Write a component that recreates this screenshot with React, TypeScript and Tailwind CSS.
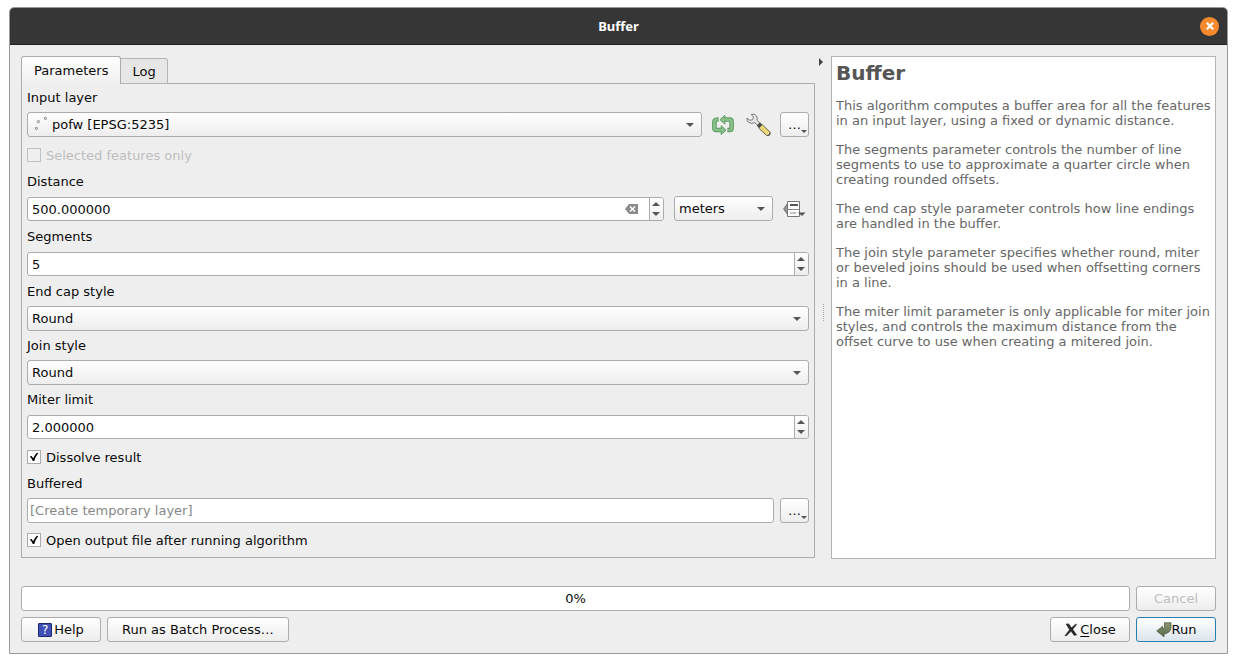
import { useState, type ReactNode } from "react";

const HELP_TEXT = [
  "This algorithm computes a buffer area for all the features in an input layer, using a fixed or dynamic distance.",
  "The segments parameter controls the number of line segments to use to approximate a quarter circle when creating rounded offsets.",
  "The end cap style parameter controls how line endings are handled in the buffer.",
  "The join style parameter specifies whether round, miter or beveled joins should be used when offsetting corners in a line.",
  "The miter limit parameter is only applicable for miter join styles, and controls the maximum distance from the offset curve to use when creating a mitered join.",
];

const BUTTON =
  "flex h-[25px] items-center justify-center rounded-[3px] border border-[#acacac] bg-linear-to-b from-white to-[#ededed] whitespace-nowrap";

// ─── Icons ────────────────────────────────────────────────
function ArrowDown({ className = "h-1 w-2" }: { className?: string }) {
  return (
    <svg viewBox="0 0 8 4" className={className} aria-hidden="true">
      <path d="M0 0h8L4 4z" fill="#555" />
    </svg>
  );
}

function ArrowUp() {
  return (
    <svg viewBox="0 0 8 4" className="h-1 w-2" aria-hidden="true">
      <path d="M0 4h8L4 0z" fill="#555" />
    </svg>
  );
}

function PointsIcon() {
  return (
    <svg viewBox="0 0 16 16" className="size-4" aria-hidden="true">
      <g fill="#eee" stroke="#777" strokeWidth="0.9">
        <circle cx="5.4" cy="12.4" r="1.1" />
        <circle cx="7.4" cy="5.6" r="1.1" />
        <circle cx="14.4" cy="2.4" r="1.1" />
      </g>
    </svg>
  );
}

function IterateIcon() {
  return (
    <svg viewBox="0 0 24 20" className="h-5 w-6" aria-hidden="true">
      <g fill="none" strokeLinecap="square">
        <g stroke="#5a9c60" strokeWidth="4.6">
          <path d="M4.300 4.500Q2.400 4.500 2.400 6.500V13Q2.400 15 4.400 15H9.500" />
          <path d="M12.500 4.500H17.600Q19.600 4.500 19.600 6.500V13Q19.600 15 17.700 15" />
        </g>
        <g fill="#8abf8a" stroke="#5a9c60">
          <path d="M9.500 11L14 15.200L9.500 19.300Z" />
          <path d="M12.500 .7L8 4.700L12.500 8.800Z" />
        </g>
        <g stroke="#8abf8a" strokeWidth="2.6">
          <path d="M4.300 4.500Q2.400 4.500 2.400 6.500V13Q2.400 15 4.400 15H9.500" />
          <path d="M12.500 4.500H17.600Q19.600 4.500 19.600 6.500V13Q19.600 15 17.700 15" />
        </g>
      </g>
    </svg>
  );
}

function WrenchIcon() {
  return (
    <svg viewBox="0 0 26 24" className="h-6 w-[26px]" aria-hidden="true">
      <path
        d="M6.200 1.300Q9.500 .3 11.500 3Q12.600 5 12 7.300L15.200 10.300L13.200 12.600L9.700 9.600Q6 11.500 3.200 9Q1.800 7.500 2 5.200L5.200 7.400L7.600 6.600L8.600 4.200Z"
        fill="#e6e9e8"
        stroke="#777"
      />
      <path d="M11.800 12.700L14.900 9.300L17.200 11.500L14 15Z" fill="#4d4d48" />
      <path
        d="M13.800 15.200L17.200 11.700L24.800 18.800Q25.800 20.300 24.600 21.900Q23.200 23.200 21.500 22.400Z"
        fill="#ecd777"
        stroke="#6b6750"
      />
      <path d="M22 22.500L25.200 19.500Q26 21.500 24.300 22.500Q23.200 23.300 22 22.500Z" fill="#55534a" />
      <circle cx="23.200" cy="20.800" r="0.7" fill="#eee" />
    </svg>
  );
}

function DataDefinedIcon() {
  return (
    <svg viewBox="0 0 24 18" className="h-[18px] w-6" aria-hidden="true">
      <path d="M5 3V15L.7 9Z" fill="#999" stroke="#666" />
      <path d="M4.500 1.500H16.500V16.500H4.500Z" fill="#fff" stroke="#777" />
      <path d="M7 5H15" stroke="#555" strokeWidth="2" />
      <path d="M5 9.500H16M7 13H13" stroke="#888" />
      <path d="M15 12.500H22.500L19 16Z" fill="#555" />
    </svg>
  );
}

function ClearIcon() {
  return (
    <svg viewBox="0 0 13 10" className="h-2.5 w-[13px]" aria-hidden="true">
      <path d="M4 0H13V10H4L0 5Z" fill="#8b8b8b" />
      <path d="M5 2.500L10 7.500M10 2.500L5 7.500" stroke="#fff" strokeWidth="1.500" />
    </svg>
  );
}

function CloseIcon() {
  return (
    <svg viewBox="0 0 14 14" className="size-3.5" aria-hidden="true">
      <path
        d="M2 1L4.600 .8L7.600 4.700L11.400 1.200L12.800 1.400L8.800 6.300L12.700 12L10.200 12.500L7 8.300L2.600 12.800L.8 12.800L5.500 6.700Z"
        fill="#262626"
        stroke="#262626"
        strokeWidth="0.400"
      />
    </svg>
  );
}

function RunIcon() {
  return (
    <svg viewBox="0 0 16 16" className="size-4" aria-hidden="true">
      <defs>
        <linearGradient id="run-fill" x1="0" y1="0" x2="0" y2="1">
          <stop offset="0" stopColor="#8a9a74" />
          <stop offset="1" stopColor="#566849" />
        </linearGradient>
      </defs>
      <path
        d="M8.500 .8H15V5.500Q14.500 11 8 12V14.800L.8 9L6.500 4.300V7Q8.700 7 8.500 4.500Z"
        fill="url(#run-fill)"
        stroke="#4c5a42"
        strokeWidth="0.800"
      />
    </svg>
  );
}

// ─── Form pieces ──────────────────────────────────────────
interface FieldProps {
  label: string;
  htmlFor: string;
  className?: string;
  children: ReactNode;
}

function Field({ label, htmlFor, className = "", children }: FieldProps) {
  return (
    <div className={`flex flex-col gap-[7px] ${className}`}>
      <label htmlFor={htmlFor} className="self-start">
        {label}
      </label>
      <div className="flex h-[25px] items-end">{children}</div>
    </div>
  );
}

interface ComboProps {
  id: string;
  options: string[];
  label?: string;
  icon?: ReactNode;
  className?: string;
}

function Combo({ id, options, label, icon, className = "flex-1" }: ComboProps) {
  return (
    <div className={`relative min-w-0 ${className}`}>
      {icon && <span className="pointer-events-none absolute top-1 left-1">{icon}</span>}
      <select
        id={id}
        aria-label={label}
        className={`block h-[25px] w-full appearance-none rounded-[3px] border border-[#acacac] bg-linear-to-b from-white to-[#ededed] pr-6 outline-none ${icon ? "pl-6" : "pl-1"}`}
      >
        {options.map((o) => (
          <option key={o}>{o}</option>
        ))}
      </select>
      <ArrowDown className="pointer-events-none absolute top-[11px] right-2 h-1 w-2" />
    </div>
  );
}

interface SpinProps {
  id: string;
  initial: number;
  decimals?: number;
  clearable?: boolean;
}

function Spin({ id, initial, decimals = 0, clearable = false }: SpinProps) {
  const [value, setValue] = useState(initial.toFixed(decimals));
  const step = (by: number) => setValue(((Number(value) || 0) + by).toFixed(decimals));

  return (
    <div className="flex h-6 min-w-0 flex-1 overflow-hidden rounded-[3px] border border-[#acacac] bg-white">
      <input
        id={id}
        value={value}
        onChange={(e) => setValue(e.target.value)}
        className="min-w-0 flex-1 px-1 outline-none"
      />
      {clearable && (
        <button type="button" aria-label="Clear" className="mr-[11px]" onClick={() => setValue(initial.toFixed(decimals))}>
          <ClearIcon />
        </button>
      )}
      <div className="flex w-3.5 flex-col items-start border-l border-[#acacac] bg-linear-to-b from-white to-[#ededed] py-px pl-0.5">
        <button type="button" aria-label="Increase" className="flex flex-1 items-center" onClick={() => step(1)}>
          <ArrowUp />
        </button>
        <button type="button" aria-label="Decrease" className="flex flex-1 items-center" onClick={() => step(-1)}>
          <ArrowDown />
        </button>
      </div>
    </div>
  );
}

interface CheckProps {
  label: string;
  className?: string;
  checked?: boolean;
  disabled?: boolean;
}

function Check({ label, className = "", checked = false, disabled = false }: CheckProps) {
  return (
    <label className={`flex items-start gap-[5px] self-start ${disabled ? "text-[#bebebe]" : ""} ${className}`}>
      <span className="relative size-3.5">
        <input
          type="checkbox"
          defaultChecked={checked}
          disabled={disabled}
          className="peer block size-3.5 appearance-none border border-[#acacac] bg-white disabled:border-[#c0c0c0] disabled:bg-[#efefef]"
        />
        <svg
          viewBox="0 0 14 14"
          className="pointer-events-none absolute inset-0 hidden size-3.5 peer-checked:block"
          aria-hidden="true"
        >
          <path d="M2.800 6.500L4.600 6L6.200 8.300Q7.500 5 10 2.800L11.300 3Q8.500 6.500 7.200 11H5.800Q4.800 8.500 2.800 6.500Z" fill="#000" />
        </svg>
      </span>
      {label}
    </label>
  );
}

function MoreButton({ label }: { label: string }) {
  return (
    <button type="button" aria-label={label} className={`${BUTTON} relative w-[29px] shrink-0`}>
      …
      <ArrowDown className="absolute right-px bottom-[3px] h-[3px] w-1.5" />
    </button>
  );
}

function ParametersForm() {
  return (
    <>
      <Field label="Input layer" htmlFor="input-layer">
        <Combo id="input-layer" options={["pofw [EPSG:5235]"]} icon={<PointsIcon />} />
        <div className="flex h-full shrink-0 items-center gap-[9px] pl-2.5">
          <button type="button" aria-label="Iterate over this layer">
            <IterateIcon />
          </button>
          <button type="button" aria-label="Advanced options">
            <WrenchIcon />
          </button>
          <MoreButton label="Browse input" />
        </div>
      </Field>
      <Check label="Selected features only" disabled className="mt-[11px]" />

      <Field label="Distance" htmlFor="distance" className="mt-[11px]">
        <Spin id="distance" initial={500} decimals={6} clearable />
        <Combo id="units" label="Units" options={["meters", "feet"]} className="ml-2.5 w-[99px]" />
        <button type="button" aria-label="Data defined override" className="mr-0.5 mb-[3px] ml-2.5">
          <DataDefinedIcon />
        </button>
      </Field>
      <Field label="Segments" htmlFor="segments" className="mt-2">
        <Spin id="segments" initial={5} />
      </Field>
      <Field label="End cap style" htmlFor="cap" className="mt-2">
        <Combo id="cap" options={["Round", "Flat", "Square"]} />
      </Field>
      <Field label="Join style" htmlFor="join" className="mt-[7px]">
        <Combo id="join" options={["Round", "Miter", "Bevel"]} />
      </Field>
      <Field label="Miter limit" htmlFor="miter" className="mt-[7px]">
        <Spin id="miter" initial={2} decimals={6} />
      </Field>
      <Check label="Dissolve result" checked className="mt-[11px]" />

      <Field label="Buffered" htmlFor="buffered" className="mt-[11px]">
        <input
          id="buffered"
          placeholder="[Create temporary layer]"
          className="mr-1.5 h-[25px] min-w-0 flex-1 rounded-[3px] border border-[#acacac] bg-white px-0.5 outline-none placeholder:text-[#888]"
        />
        <MoreButton label="Browse output" />
      </Field>
      <Check label="Open output file after running algorithm" checked className="mt-2.5" />
    </>
  );
}

export default function App() {
  const [tab, setTab] = useState<"parameters" | "log">("parameters");

  return (
    <div className="flex min-h-screen flex-col bg-white px-[9px] pt-[7px] pb-[9px] font-['DejaVu_Sans',sans-serif] text-[13px] leading-[15px] text-[#0a0a0a]">
      <div className="flex flex-1 flex-col rounded-t-[5px] border border-[#999] bg-[#eee]">
        {/* Title bar */}
        <header className="relative flex h-[37px] items-center justify-center rounded-t-[4px] border-b border-[#222] bg-[#363636]">
          <h1 className="font-['Noto_Sans',sans-serif] font-bold text-white">Buffer</h1>
          <button
            type="button"
            aria-label="Close window"
            className="absolute right-2 flex size-[19px] items-center justify-center rounded-full bg-[#f58a2c]"
          >
            <svg viewBox="0 0 8 8" className="size-2" aria-hidden="true">
              <path d="M.8 .8L7.200 7.200M7.200 .8L.8 7.200" stroke="#fff" strokeWidth="2.200" />
            </svg>
          </button>
        </header>

        <div className="flex flex-1 flex-col p-[11px]">
          <main className="flex flex-1">
            <section className="flex min-w-0 flex-1 flex-col pb-px">
              <div role="tablist" className="z-10 flex h-7 items-end">
                <button
                  type="button"
                  role="tab"
                  aria-selected={tab === "parameters"}
                  onClick={() => setTab("parameters")}
                  className="h-7 rounded-t-[3px] border border-b-0 border-[#acacac] bg-linear-to-b from-white to-[#efefef] px-3"
                >
                  Parameters
                </button>
                <button
                  type="button"
                  role="tab"
                  aria-selected={tab === "log"}
                  onClick={() => setTab("log")}
                  className="h-[26px] rounded-tr-[3px] border border-l-0 border-[#b4b4b4] bg-[#e6e6e6] px-[11px]"
                >
                  Log
                </button>
              </div>
              <div className="-mt-px flex flex-1 flex-col border border-[#acacac] px-[5px] pt-1.5 pb-[9px]">
                {tab === "parameters" && <ParametersForm />}
              </div>
            </section>

            {/* Splitter handle */}
            <div className="flex w-4 shrink-0 flex-col items-center">
              <button type="button" aria-label="Collapse help" className="mt-0.5 mr-1">
                <svg viewBox="0 0 4 8" className="h-2 w-1" aria-hidden="true">
                  <path d="M0 0V8L4 4Z" fill="#444" />
                </svg>
              </button>
              <div className="my-auto h-[17px] border-l border-dotted border-[#aaa]" />
            </div>

            <aside className="w-[385px] shrink-0 border border-[#b4b4b4] bg-white px-1 text-[#666]">
              <h2 className="mt-1 mb-[13px] text-xl leading-6 font-bold text-[#555]">Buffer</h2>
              {HELP_TEXT.map((text) => (
                <p key={text} className="mb-3.5">
                  {text}
                </p>
              ))}
            </aside>
          </main>

          <footer className="mt-[27px] flex flex-col gap-1.5">
            <div className="flex gap-1.5">
              <div
                role="progressbar"
                aria-valuenow={0}
                className="flex h-[25px] flex-1 items-center justify-center rounded-[3px] border border-[#acacac] bg-white"
              >
                0%
              </div>
              <button type="button" disabled className={`${BUTTON} w-20 text-[#bebebe]`}>
                Cancel
              </button>
            </div>
            <div className="flex gap-1.5">
              <button type="button" className={`${BUTTON} w-20 gap-0.5`}>
                <span className="flex size-3.5 items-center justify-center rounded-[1px] border border-[#1c2a6b] bg-[#3f51b5] text-xs text-white">
                  ?
                </span>
                Help
              </button>
              <button type="button" className={`${BUTTON} px-3.5`}>
                Run as Batch Process…
              </button>
              <button type="button" className={`${BUTTON} ml-auto w-20 gap-0.5`}>
                <CloseIcon />
                <span>
                  <span className="underline underline-offset-2">C</span>lose
                </span>
              </button>
              <button
                type="button"
                className="flex h-[25px] w-20 items-center justify-center rounded-[3px] border border-[#2a7db0] bg-linear-to-b from-white to-[#dce4ec]"
              >
                <RunIcon />
                Run
              </button>
            </div>
          </footer>
        </div>
      </div>
    </div>
  );
}
